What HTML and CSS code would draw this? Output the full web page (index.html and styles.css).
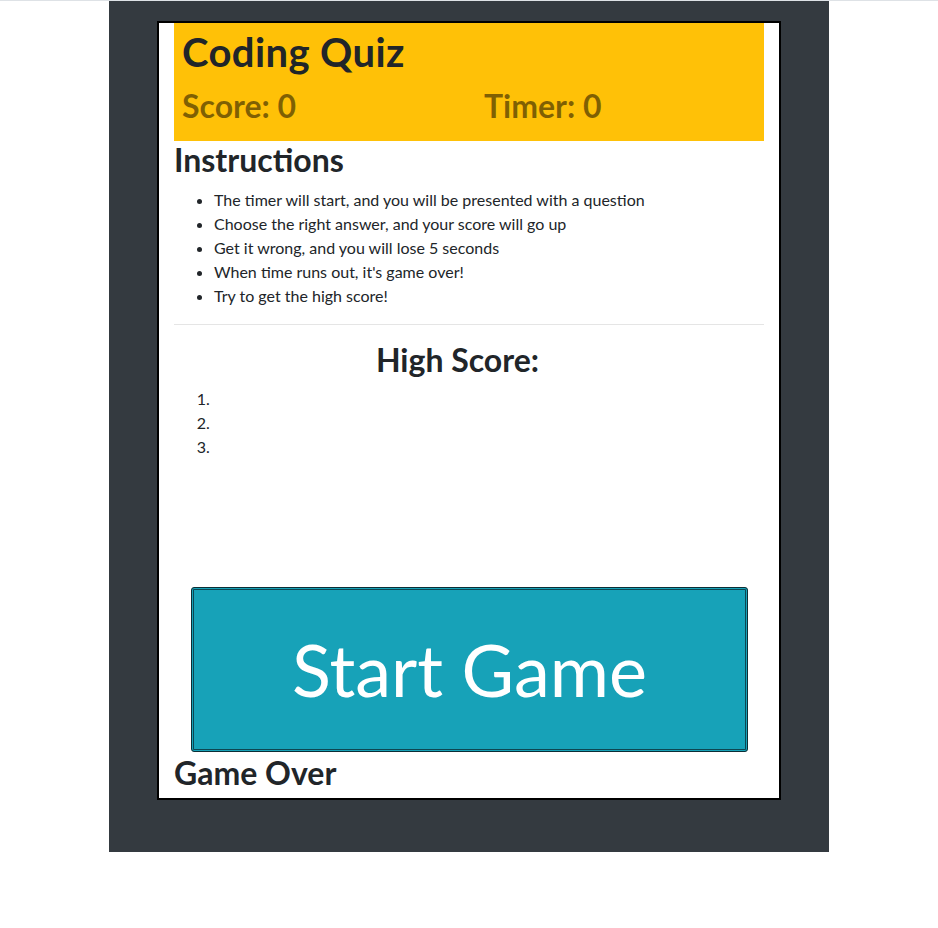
FILE: index.html
```html
<!DOCTYPE html>
<html lang="en">
<head>
<meta charset="utf-8">
<title>Coding Quiz</title>
<link rel="stylesheet" href="styles.css">
</head>
<body>
<div class="page">
  <div class="card">
    <header class="banner">
      <h1 class="title">Coding Quiz</h1>
      <div class="stats">
        <h2 class="stat">Score: 0</h2>
        <h2 class="stat">Timer: 0</h2>
      </div>
    </header>
    <section class="instructions">
      <h2 class="heading">Instructions</h2>
      <ul class="list">
        <li>The timer will start, and you will be presented with a question</li>
        <li>Choose the right answer, and your score will go up</li>
        <li>Get it wrong, and you will lose 5 seconds</li>
        <li>When time runs out, it's game over!</li>
        <li>Try to get the high score!</li>
      </ul>
    </section>
    <hr class="divider">
    <section class="scores">
      <h2 class="heading heading-center">High Score:</h2>
      <ol class="list">
        <li></li>
        <li></li>
        <li></li>
      </ol>
    </section>
    <div class="actions">
      <button class="start" type="button">Start Game</button>
    </div>
    <h2 class="heading over">Game Over</h2>
  </div>
</div>
</body>
</html>
```
FILE: styles.css
```css
* { box-sizing: border-box; }
html, body { margin: 0; padding: 0; }
body {
  border-top: 1px solid #dee2e6;
  background: #fff;
  font-family: Lato, "Open Sans", sans-serif;
  color: #212529;
  font-size: 16px;
  line-height: 1.5;
}
.page {
  width: 720px;
  margin: 0 auto;
  background: #343a40;
  padding: 20px 48px 52px;
}
.card {
  background: #fff;
  border: 2px solid #000;
  padding: 0 15px;
}
.banner {
  background: #ffc107;
  padding: 8px;
}
.title {
  margin: 0 0 8px;
  font-size: 40px;
  font-weight: 700;
  line-height: 1.2;
  letter-spacing: 0.4px;
  position: relative;
  top: -3px;
}
.stats {
  display: grid;
  grid-template-columns: 1fr 1fr;
  margin: 0 -15px;
}
.stat {
  margin: 0 0 8px;
  padding: 0 15px;
  font-size: 32px;
  font-weight: 700;
  line-height: 1.2;
  color: rgba(0, 0, 0, 0.5);
}
.heading {
  margin: 0 0 8px;
  font-size: 32px;
  font-weight: 700;
  line-height: 1.2;
}
.heading-center {
  text-align: center;
  padding-right: 23px;
}
.list {
  margin: 0 0 16px;
  padding-left: 40px;
}
.list li { min-height: 24px; }
.divider {
  margin: 0;
  border: 0;
  border-top: 1px solid rgba(0, 0, 0, 0.1);
}
.scores { padding-top: 16px; }
.actions {
  padding: 112px 16px 0 17px;
}
.start {
  display: block;
  width: 100%;
  margin: 0;
  font-family: inherit;
  font-size: 72px;
  font-weight: 400;
  line-height: 1.5;
  color: #fff;
  background: #17a2b8;
  border: 1px solid #0b2e35;
  border-radius: 3px;
  box-shadow: inset 0 0 0 1px #17a2b8, inset 0 0 0 2px #0d4752;
  padding: 27px 16px 28px;
  cursor: pointer;
}
.over {
  margin: 2px 0 0;
  padding-bottom: 5px;
}
```
